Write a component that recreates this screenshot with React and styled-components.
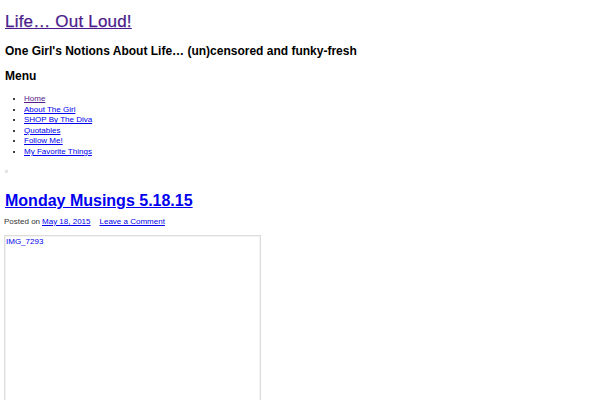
import React from "react";
import styled, { createGlobalStyle } from "styled-components";

const GlobalStyle = createGlobalStyle`
  body {
    margin: 0;
    background: #fff;
    font-family: "Liberation Sans", Arial, sans-serif;
    color: #000;
  }
`;

const menuItems = [
  { label: "Home", visited: true },
  { label: "About The Girl" },
  { label: "SHOP By The Diva" },
  { label: "Quotables" },
  { label: "Follow Me!" },
  { label: "My Favorite Things" },
];

const App = () => (
  <Page>
    <GlobalStyle />
    <Masthead>
      <SiteTitle>
        <a href="#">Life… Out Loud!</a>
      </SiteTitle>
      <Tagline>One Girl's Notions About Life… (un)censored and funky-fresh</Tagline>
    </Masthead>

    <Nav>
      <MenuTitle>Menu</MenuTitle>
      <MenuList>
        {menuItems.map((item) => (
          <MenuItem key={item.label}>
            <MenuLink href="#" $visited={item.visited}>
              {item.label}
            </MenuLink>
          </MenuItem>
        ))}
      </MenuList>
    </Nav>

    <Spacer />

    <Post>
      <PostTitle>
        <a href="#">Monday Musings 5.18.15</a>
      </PostTitle>
      <Meta>
        <span>Posted on</span>
        <MetaLink href="#">May 18, 2015</MetaLink>
        <MetaLink href="#" $gap>
          Leave a Comment
        </MetaLink>
      </Meta>
      <ImageFrame>
        <AltText href="#">IMG_7293</AltText>
      </ImageFrame>
    </Post>
  </Page>
);

const Page = styled.div`
  padding: 0 5px;
`;

const Masthead = styled.header`
  padding-top: 12px;
`;

const SiteTitle = styled.h1`
  margin: 0;
  font-size: 17px;
  font-weight: normal;
  line-height: 20px;
  letter-spacing: 0.2px;
  -webkit-text-stroke: 0.25px #4b1d8c;

  a {
    color: #4b1d8c;
  }
`;

const Tagline = styled.h2`
  margin: 12px 0 0;
  font-size: 12px;
  font-weight: bold;
  line-height: 14px;
`;

const Nav = styled.nav`
  margin-top: 11px;
`;

const MenuTitle = styled.h3`
  margin: 0;
  font-size: 12px;
  font-weight: bold;
  line-height: 14px;
`;

const MenuList = styled.ul`
  margin: 11px 0 0;
  padding-left: 19px;
  font-size: 8px;
  line-height: 10.6px;
`;

const MenuItem = styled.li``;

const MenuLink = styled.a`
  color: ${(p) => (p.$visited ? "#551a8b" : "#0000ee")};
`;

const Spacer = styled.div`
  width: 3px;
  height: 3px;
  margin: 12px 0 0;
  background: #e4e4e4;
`;

const Post = styled.article`
  margin-top: 18px;
`;

const PostTitle = styled.h2`
  margin: 0;
  font-size: 16px;
  font-weight: bold;
  line-height: 20px;

  a {
    color: #0000ee;
  }
`;

const Meta = styled.div`
  display: flex;
  gap: 2px;
  margin: 6px 0 0 -1px;
  font-size: 8px;
  line-height: 10px;
  color: #333;
`;

const MetaLink = styled.a`
  color: #0000ee;
  margin-left: ${(p) => (p.$gap ? "7px" : "0")};
`;

const ImageFrame = styled.div`
  margin: 8px 0 0 -1px;
  width: 254px;
  height: 180px;
  border: 1px solid #ddd;
  box-shadow: inset 0 0 0 1px #f2f2f2;
  padding: 1px 0 0 1px;
  font-size: 8px;
  line-height: 10px;
`;

const AltText = styled.a`
  color: #0000ee;
  text-decoration: none;
`;

export default App;
